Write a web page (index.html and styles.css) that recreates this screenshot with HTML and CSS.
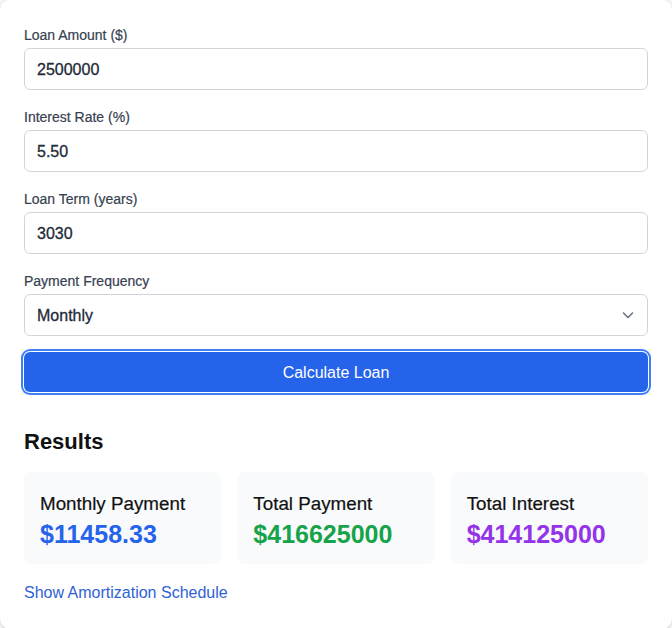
FILE: index.html
```html
<!DOCTYPE html>
<html lang="en">
<head>
<meta charset="utf-8">
<title>Loan Calculator</title>
<link rel="stylesheet" href="styles.css">
</head>
<body>
<div class="card">
  <form class="form">
    <div class="field">
      <label class="label" for="amount">Loan Amount ($)</label>
      <input class="input" id="amount" type="text" value="2500000">
    </div>
    <div class="field">
      <label class="label" for="rate">Interest Rate (%)</label>
      <input class="input" id="rate" type="text" value="5.50">
    </div>
    <div class="field">
      <label class="label" for="term">Loan Term (years)</label>
      <input class="input" id="term" type="text" value="3030">
    </div>
    <div class="field">
      <label class="label" for="freq">Payment Frequency</label>
      <div class="select-wrap">
        <div class="select" id="freq">Monthly</div>
        <svg class="chevron" width="16" height="16" viewBox="0 0 16 16" fill="none" stroke="#6b7280" stroke-width="1.6" stroke-linecap="round" stroke-linejoin="round"><path d="M3.5 6l4.5 4.5L12.5 6"/></svg>
      </div>
    </div>
    <button class="btn" type="button">Calculate Loan</button>
  </form>

  <h2 class="results-title">Results</h2>
  <div class="results">
    <div class="stat">
      <div class="stat-label">Monthly Payment</div>
      <div class="stat-value blue">$11458.33</div>
    </div>
    <div class="stat">
      <div class="stat-label">Total Payment</div>
      <div class="stat-value green">$416625000</div>
    </div>
    <div class="stat">
      <div class="stat-label">Total Interest</div>
      <div class="stat-value purple">$414125000</div>
    </div>
  </div>
  <a class="link" href="#">Show Amortization Schedule</a>
</div>
</body>
</html>
```
FILE: styles.css
```css
* { box-sizing: border-box; }
html, body { margin: 0; padding: 0; }
body {
  background: #f3f4f6;
  font-family: "Liberation Sans", Arial, sans-serif;
  color: #111827;
}
.card {
  background: #ffffff;
  border-radius: 10px;
  box-shadow: 0 1px 3px rgba(0,0,0,0.10), 0 1px 2px rgba(0,0,0,0.06);
  padding: 24px;
  min-height: 628px;
}
.form {
  display: flex;
  flex-direction: column;
  gap: 16px;
}
.field {
  display: flex;
  flex-direction: column;
  gap: 3px;
}
.label {
  padding-top: 1px;
  font-size: 14px;
  line-height: 20px;
  color: #374151;
  -webkit-text-stroke: 0.2px #374151;
}
.input, .select {
  display: block;
  width: 100%;
  height: 42px;
  border: 1px solid #d1d5db;
  border-radius: 6px;
  padding: 9px 12px 7px;
  font-family: inherit;
  font-size: 16px;
  line-height: 24px;
  color: #1f2937;
  background: #fff;
  outline: none;
  -webkit-text-stroke: 0.3px #1f2937;
}
.select-wrap { position: relative; }
.chevron {
  position: absolute;
  right: 12px;
  top: 13px;
}
.btn {
  height: 40px;
  width: 100%;
  border: none;
  border-radius: 6px;
  background: #2563eb;
  color: #fff;
  font-family: inherit;
  font-size: 16px;
  padding: 2px 0 0;
  box-shadow: 0 0 0 1px #fff, 0 0 0 3px #3b82f6;
}
.results-title {
  margin: 34px 0 14px;
  font-size: 22px;
  line-height: 32px;
  font-weight: 700;
  color: #111;
}
.results {
  display: grid;
  grid-template-columns: repeat(3, 1fr);
  gap: 16px;
}
.stat {
  background: #f9fafb;
  border-radius: 8px;
  padding: 18px 16px 14px;
}
.stat-label {
  font-size: 18.8px;
  line-height: 28px;
  color: #111;
  -webkit-text-stroke: 0.2px #111;
}
.stat-value {
  font-size: 25px;
  line-height: 32px;
  font-weight: 700;
}
.blue { color: #2563eb; }
.green { color: #16a34a; }
.purple { color: #9333ea; }
.link {
  display: inline-block;
  margin-top: 17px;
  font-size: 16px;
  line-height: 24px;
  color: #2f62d6;
  text-decoration: none;
}
```
